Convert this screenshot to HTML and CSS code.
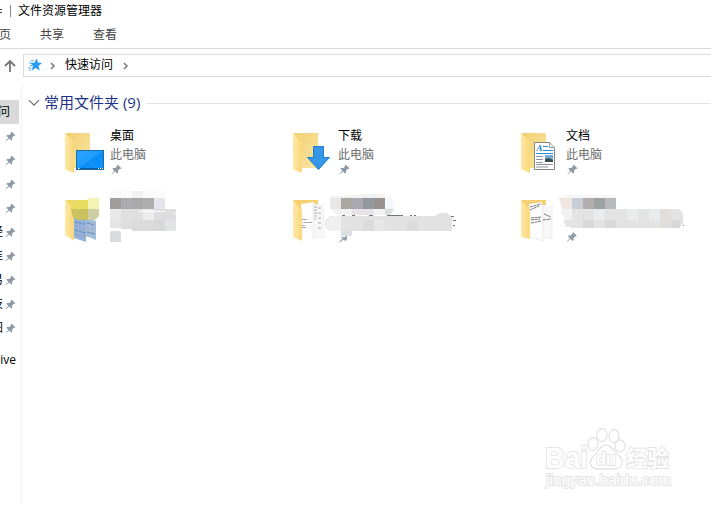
FILE: index.html
```html
<!DOCTYPE html>
<html lang="zh-CN">
<head>
  <meta charset="UTF-8" />
  <title>文件资源管理器</title>
  <link rel="stylesheet" href="styles.css">
</head>
<body>

<svg class="defs" width="0" height="0">
  <defs>
    <linearGradient id="flap" x1="0" x2="1" y1="0" y2="0">
      <stop offset="0" stop-color="#ffe9a6"/>
      <stop offset="1" stop-color="#f9d77c"/>
    </linearGradient>
    <linearGradient id="back" x1="0" x2="1" y1="0" y2="1">
      <stop offset="0" stop-color="#f2cf70"/>
      <stop offset="1" stop-color="#fbe6a6"/>
    </linearGradient>
    <linearGradient id="screen" x1="0" x2="1" y1="0" y2="1">
      <stop offset="0" stop-color="#2ba4fb"/>
      <stop offset=".5" stop-color="#1e9bfb"/>
      <stop offset=".52" stop-color="#0a8cf4"/>
      <stop offset="1" stop-color="#1199fc"/>
    </linearGradient>
    <symbol id="pin" viewBox="0 0 11 11">
      <path d="M6.6 .5 10.4 4.3 9.3 4.9 8.7 4.9 7.1 6.6 7.1 8.7 6.2 9.5 4 7.4 .8 10.3 .4 9.9 3.3 6.7 1.3 4.8 2.1 3.9 4.3 3.9 6 2.3 6 1.4Z" fill="#8e9ba5"/>
    </symbol>
    <symbol id="folder" viewBox="0 0 27 42">
      <path d="M1 1H25V36H9Z" fill="url(#back)"/>
      <path d="M0 1 9 10.5V41L0 37.5Z" fill="url(#flap)"/>
    </symbol>
  </defs>
</svg>

<div class="titlebar">
  <span class="toolbar-more"><i></i><b></b></span>
  <span class="title">文件资源管理器</span>
</div>

<div class="tabs">
  <span class="tab first">主页</span>
  <span class="tab">共享</span>
  <span class="tab">查看</span>
</div>

<div class="address-row">
  <svg class="up" width="12" height="14" viewBox="0 0 12 14"><path d="M6 13V2M1 7 6 2 11 7" fill="none" stroke="#747474" stroke-width="1.8"/></svg>
  <div class="address">
    <svg class="star" width="15" height="14" viewBox="0 0 15 14">
      <path d="M8.6 .5 10 4.4 14.2 5 10.6 7.8 11.6 12.5 7.8 10 3.7 12.5 5 8 2.4 5 6.5 4.4Z" fill="#2b9df0"/>
      <path d="M3 2.5H5.5M1 5H3.5M2 7.5H4.5M0 10H3.5M1 12H3" stroke="#58b4f4"/>
    </svg>
    <svg class="chev" width="6" height="8" viewBox="0 0 6 8"><path d="M1 1 4 4 1 7" fill="none" stroke="#777" stroke-width="1.5"/></svg>
    <span class="crumb">快速访问</span>
    <svg class="chev" width="6" height="8" viewBox="0 0 6 8"><path d="M1 1 4 4 1 7" fill="none" stroke="#777" stroke-width="1.5"/></svg>
  </div>
</div>

<div class="main">
  <div class="nav">
    <div class="nav-item selected"><span>快速访问</span></div>
    <div class="nav-item"><span></span><svg class="pin"><use href="#pin"/></svg></div>
    <div class="nav-item"><span></span><svg class="pin"><use href="#pin"/></svg></div>
    <div class="nav-item"><span></span><svg class="pin"><use href="#pin"/></svg></div>
    <div class="nav-item"><span></span><svg class="pin"><use href="#pin"/></svg></div>
    <div class="nav-item"><span>经</span><svg class="pin"><use href="#pin"/></svg></div>
    <div class="nav-item"><span>准</span><svg class="pin"><use href="#pin"/></svg></div>
    <div class="nav-item"><span>易</span><svg class="pin"><use href="#pin"/></svg></div>
    <div class="nav-item"><span>技</span><svg class="pin"><use href="#pin"/></svg></div>
    <div class="nav-item"><span>图</span><svg class="pin"><use href="#pin"/></svg></div>
    <div class="nav-item drive"><span>OneDrive</span></div>
  </div>

  <div class="content">
    <div class="group">
      <svg width="12" height="8" viewBox="0 0 12 8"><path d="M1 1.2 6 6.2 11 1.2" fill="none" stroke="#6d6d6d" stroke-width="1.2"/></svg>
      <span>常用文件夹 <em>(9)</em></span>
      <hr>
    </div>

    <div class="tiles">
      <div class="tile">
        <svg class="icon" width="45" height="50" viewBox="0 0 45 50">
          <use href="#folder" width="27" height="42"/>
          <rect x="11.5" y="18.5" width="27" height="19" fill="url(#screen)" stroke="#176cae"/>
          <path d="M12 36.5H38" stroke="#0b5b9c"/>
          <path d="M13 36.5H14.5M33 36.5H34M35 36.5H36M37 36.5H38" stroke="#fff"/>
        </svg>
        <div class="info">
          <div class="name">桌面</div>
          <div class="place">此电脑</div>
          <svg class="pin"><use href="#pin"/></svg>
        </div>
      </div>
      <div class="tile">
        <svg class="icon" width="45" height="50" viewBox="0 0 45 50">
          <use href="#folder" width="27" height="42"/>
          <path d="M20.5 14.5H30.5V25.5H36.5L25.5 37.5 14.5 25.5H20.5Z" fill="#3697e9" stroke="#217cc9"/>
        </svg>
        <div class="info">
          <div class="name">下载</div>
          <div class="place">此电脑</div>
          <svg class="pin"><use href="#pin"/></svg>
        </div>
      </div>
      <div class="tile">
        <svg class="icon" width="45" height="50" viewBox="0 0 45 50">
          <use href="#folder" width="27" height="42"/>
          <path d="M13.5 10.5H28.5L33.5 15.5V37.5H13.5Z" fill="#fff" stroke="#858585"/>
          <path d="M28.5 10.5V15.5H33.5" fill="#eee" stroke="#9a9a9a"/>
          <text class="doc-letter" x="15.5" y="19">A</text>
          <path d="M22 14.5H27M22 18.5H32M15 21.5H32" stroke="#2a91d4"/>
          <path d="M15 24.5H22M15 27.5H22M15 30.5H22M15 32.5H32M15 35H27" stroke="#8e9499"/>
          <rect x="24" y="23" width="8" height="7" fill="#6faed8"/>
          <path d="M24 30V27L28 26 32 28V30Z" fill="#344d52"/>
        </svg>
        <div class="info">
          <div class="name">文档</div>
          <div class="place">此电脑</div>
          <svg class="pin"><use href="#pin"/></svg>
        </div>
      </div>

      <!-- names and paths masked out -->
      <svg class="masked" width="172" height="65" viewBox="10 0 172 65">
        <path d="M11 15H33V52H20Z" fill="#f2cf70"/>
        <path d="M19 32 31 35V57L19 53Z" fill="#91b3dc"/>
        <path d="M31 33 41 36V55L31 51Z" fill="#a3bddc"/>
        <path d="M20 37 30 39M20 45 30 48M32 38 40 40M32 47 40 49" stroke="#7590bb" stroke-width="1.5" stroke-dasharray="3 1"/>
        <path d="M20 41 30 44M20 49 30 52M32 43 40 45" stroke="#b199b0" stroke-width="1.5" stroke-dasharray="2 2"/>
        <path d="M10 15 19 22V56L10 50Z" fill="url(#flap)"/>
        <path d="M12 16H22V24H17Z" fill="#ebdd62"/>
        <path d="M22 15H33V24H22Z" fill="#e8df61"/>
        <path d="M33 13H44V24H33Z" fill="#f4f3b3"/>
        <path d="M16 24H33V35H23L18 32Z" fill="#c9c25d"/>
        <path d="M33 24H44V31L40 35H33Z" fill="#d0cea3"/>
        <path d="M55 6H110V13H55Z" fill="#fafafa"/>
        <path d="M77 6H88V13H77Z" fill="#f2f2f2"/>
        <path d="M55 13H66V24H55Z" fill="#a19d9b"/>
        <path d="M66 13H77V24H66Z" fill="#aaacaf"/>
        <path d="M77 13H88V24H77Z" fill="#a9a9aa"/>
        <path d="M88 13H99V24H88Z" fill="#adadad"/>
        <path d="M99 13H110V24H99Z" fill="#e5e6ed"/>
        <path d="M55 24H66V35H55Z" fill="#e9e9e9"/>
        <path d="M66 24H88V35H66Z" fill="#e0dfdf"/>
        <path d="M88 24H99V35H88Z" fill="#ececed"/>
        <path d="M99 24H121V35H99Z" fill="#dddddf"/>
        <path d="M55 35H66V43H55Z" fill="#e5e5e5"/>
        <path d="M66 35H77V44H66Z" fill="#dedede"/>
        <path d="M77 35H99V46H77Z" fill="#dbdbdb"/>
        <path d="M99 35H110V46H99Z" fill="#d8d8d8"/>
        <path d="M110 35H121V46H110Z" fill="#e3e4e5"/>
        <path d="M84 26.5H110M116 27.5H117M119 28.5H121" stroke="#fff"/>
        <path d="M56 46H64L66 48V57H55V47Z" fill="#d8dce0"/>
      </svg>
      <svg class="masked" width="172" height="65" viewBox="8 0 172 65">
        <path d="M8 15H33V20L17 52Z" fill="#f5cf70"/>
        <path d="M16 19 29 17 30 53 16 52Z" fill="#fdfdfd"/>
        <path d="M28 19 38 20 39 53 28 53Z" fill="#f7f7f7" stroke="#e3e3e3" stroke-width=".5"/>
        <path d="M17 34.5H22M18 37.5H27M17 40.5H20M17 42.5H21M29 22H32M29 25H32M29 28H32M29 31H32M29 34H31M33 23H36M33 28H36M33 33H36M33 38H36M33 43H36" stroke="#aaa"/>
        <path d="M8 15 17 25V56L8 52Z" fill="url(#flap)"/>
        <path d="M47 11 55 11 80 9H100V13H105L109 18 107 24H109L105 30H52L45 23V13Z" fill="#f2f2f2"/>
        <path d="M100 13H105L109 18 107 24H100Z" fill="#f3f6fc"/>
        <path d="M45 13H56V24H45Z" fill="#e8e7e6"/>
        <path d="M56 13H67V24H56Z" fill="#a9a8a2"/>
        <path d="M67 13H78V24H67Z" fill="#aaa8b0"/>
        <path d="M78 13H89V24H78Z" fill="#93989d"/>
        <path d="M89 13H100V24H89Z" fill="#979290"/>
        <path d="M67 24H89V30H67Z" fill="#e7e4e9"/>
        <path d="M100 24H109L105 30H100Z" fill="#dcdedd"/>
        <path d="M44 32 56 31H150L155 28H162L167 32V46H67V51H56V46H44L40 42V36Z" fill="#e2e2e2"/>
        <path d="M45 31H56V46H44L40 41 41 35Z" fill="#efefef"/>
        <path d="M78 35H89V46H78ZM122 35H133V46H122Z" fill="#dcdcdc"/>
        <path d="M89 35H100V46H89Z" fill="#e8e6e8"/>
        <path d="M56 46H67V51H56Z" fill="#dce0e4"/>
        <path d="M57 30.5H60M67 30.5H70M84 30.5H88M102 30.5H118M125 30.5H127M129 30.5H131M166 31.5H169M168 35.5H171M168 40.5H170" stroke="#737373"/>
        <path d="M54 57 57.5 53.5 55.5 51.5 59 52.5 62 50.5V54L60.5 56 58.5 54.5 54.5 57.5Z" fill="#8e9ba5"/>
      </svg>
      <svg class="masked" width="172" height="65" viewBox="8 0 172 65">
        <path d="M8 15H33V20L17 52Z" fill="#f5cf70"/>
        <path d="M16 19 29 17 30 56 16 52Z" fill="#fdfdfd"/>
        <path d="M28 20 38 20 39 53 31 53Z" fill="#f8f8f8"/>
        <path d="M30 20V56L17 52M39 20V53H32" fill="none" stroke="#ddd" stroke-width=".6"/>
        <path d="M17 22 28 19M17 25 26 21M18 33 28 32M18 35 27 34M18 38 28 36M31 29 38 32M30 35 38 34" stroke="#777" stroke-width="1" stroke-dasharray="3 .6"/>
        <path d="M8 15 17 25V54L8 52Z" fill="url(#flap)"/>
        <path d="M51 10H103V13H48L49 11Z" fill="#f7f7f7"/>
        <path d="M46 13H59V24H49Z" fill="#efe6df"/>
        <path d="M59 13H70V24H59Z" fill="#c8ced8"/>
        <path d="M70 13H81V24H70Z" fill="#b1afae"/>
        <path d="M81 13H92V24H81Z" fill="#9ea2a3"/>
        <path d="M92 13H103V24H92Z" fill="#b7b9ba"/>
        <path d="M48 24H166L170 28V39L166 43H58L51 38 52 31 48 28Z" fill="#e3e3e4"/>
        <path d="M48 24H59V35H51V29L48 28Z" fill="#f2f2f2"/>
        <path d="M81 24H92V35H81ZM114 24H125V35H114ZM136 24H147V35H136Z" fill="#e9ebec"/>
        <path d="M70 35H81V43H70ZM92 35H103V43H92ZM158 35H168L166 43H158Z" fill="#d8d8d9"/>
        <path d="M147 24H158V43H147Z" fill="#e1ddda"/>
        <path d="M53 40.5H54" stroke="#d9925b"/>
        <path d="M170 40.5H171" stroke="#4a8dcc"/>
        <use href="#pin" x="53.5" y="46.5" width="11" height="11"/>
      </svg>
    </div>
  </div>
</div>

<svg class="watermark" width="150" height="80" viewBox="0 0 150 80">
  <g fill="#fff" stroke="#e4e4e4" stroke-width="1.3">
    <ellipse cx="58" cy="24" rx="5" ry="6.5"/>
    <ellipse cx="67" cy="15" rx="5" ry="6.5"/>
    <ellipse cx="79" cy="16" rx="5" ry="6.5"/>
    <ellipse cx="85" cy="26" rx="5" ry="6"/>
    <path d="M71 25C77 25 79 32 84 36 90 42 87 49 79 49H64C55 49 53 42 58 37 63 33 65 25 71 25Z"/>
  </g>
  <text class="wm-logo" x="10" y="48" textLength="43" lengthAdjust="spacingAndGlyphs">Bai</text>
  <text class="wm-du" x="61" y="45" textLength="20" lengthAdjust="spacingAndGlyphs">du</text>
  <text class="wm-cn" x="91" y="46" textLength="43" lengthAdjust="spacingAndGlyphs">经验</text>
  <text class="wm-url" x="11" y="65" textLength="125" lengthAdjust="spacingAndGlyphs">jingyan.baidu.com</text>
</svg>

</body>
</html>
```

FILE: styles.css
```css
* {
  box-sizing: border-box;
}

body {
  margin: 0;
  width: 711px;
  height: 505px;
  overflow: hidden;
  background: #fff;
  color: #000;
  font-family: "Open Sans", "Noto Sans CJK SC", sans-serif;
  font-size: 12px;
  line-height: 18px;
}

svg {
  display: block;
  flex: none;
}

.defs {
  position: absolute;
}

.titlebar {
  display: flex;
  align-items: center;
  height: 22px;
}

.toolbar-more {
  display: flex;
  align-items: center;
  justify-content: space-between;
  width: 11px;
  height: 12px;
  margin-right: 7px;
  border-right: 1px solid #888;
}

.toolbar-more i {
  width: 2px;
  height: 4px;
  border-top: 1px solid #444;
  border-bottom: 1px solid #444;
}

.tabs {
  display: flex;
  align-items: center;
  gap: 29px;
  height: 27px;
  border-bottom: 1px solid #d9d9d9;
  color: #444;
}

.tab.first {
  margin-left: -13px;
}

.address-row {
  display: flex;
  align-items: center;
  height: 35px;
  padding: 5px 0 7px 4px;
}

.address {
  display: flex;
  flex: 1;
  align-items: center;
  height: 23px;
  margin-left: 7px;
  padding-left: 4px;
  border: 1px solid #d9d9d9;
  border-right: 0;
}

.star {
  margin-bottom: 2px;
}

.chev {
  margin-left: 7px;
}

.crumb {
  margin: 0 3px 2px 9px;
}

.main {
  display: flex;
  height: 421px;
}

.nav {
  flex: none;
  width: 22px;
  padding-top: 16px;
  border-right: 1px solid #f3f3f3;
  overflow: hidden;
}

.nav-item {
  display: flex;
  align-items: center;
  justify-content: flex-end;
  width: 19px;
  height: 24px;
  padding-right: 3px;
  white-space: nowrap;
}

.nav-item .pin {
  margin-left: 2px;
}

.nav-item.selected {
  padding-right: 9px;
  background: #d9d9d9;
}

.nav-item.drive {
  margin-top: 8px;
}

.pin {
  width: 11px;
  height: 11px;
}

.content {
  flex: none;
  width: 689px;
  padding-top: 8px;
}

.group {
  display: flex;
  align-items: center;
  height: 22px;
  padding-left: 6px;
  color: #1e3287;
  font-size: 15px;
}

.group span {
  margin: 0 0 2px 4px;
}

.group em {
  font-style: normal;
}

.group hr {
  flex: 1;
  height: 1px;
  margin: 0 0 0 7px;
  border: 0;
  background: #e2e2e2;
}

.tiles {
  display: grid;
  grid-template-columns: repeat(3, 228px);
  grid-auto-rows: 67px;
  margin-top: 4px;
  padding-left: 43px;
}

.tile {
  display: flex;
  padding-top: 9px;
}

.icon {
  margin-top: 5px;
}

.place {
  margin: 1px 0 0;
  color: #6d6d6d;
}

.info .pin {
  margin-left: 1px;
}

.doc-letter {
  fill: #1c84cc;
  font: italic bold 9px "Liberation Serif", serif;
}

.watermark {
  position: absolute;
  left: 535px;
  top: 420px;
}

.watermark text {
  fill: #fff;
  stroke: #e4e4e4;
  stroke-width: 1.8px;
  paint-order: stroke;
}

.wm-logo {
  font: bold 29px "Liberation Sans", sans-serif;
}

.wm-du {
  font: bold 18px "Liberation Sans", sans-serif;
}

.wm-cn {
  font: bold 22px "Noto Sans CJK SC", sans-serif;
}

.wm-url {
  font: 15px "Liberation Sans", sans-serif;
}
```
